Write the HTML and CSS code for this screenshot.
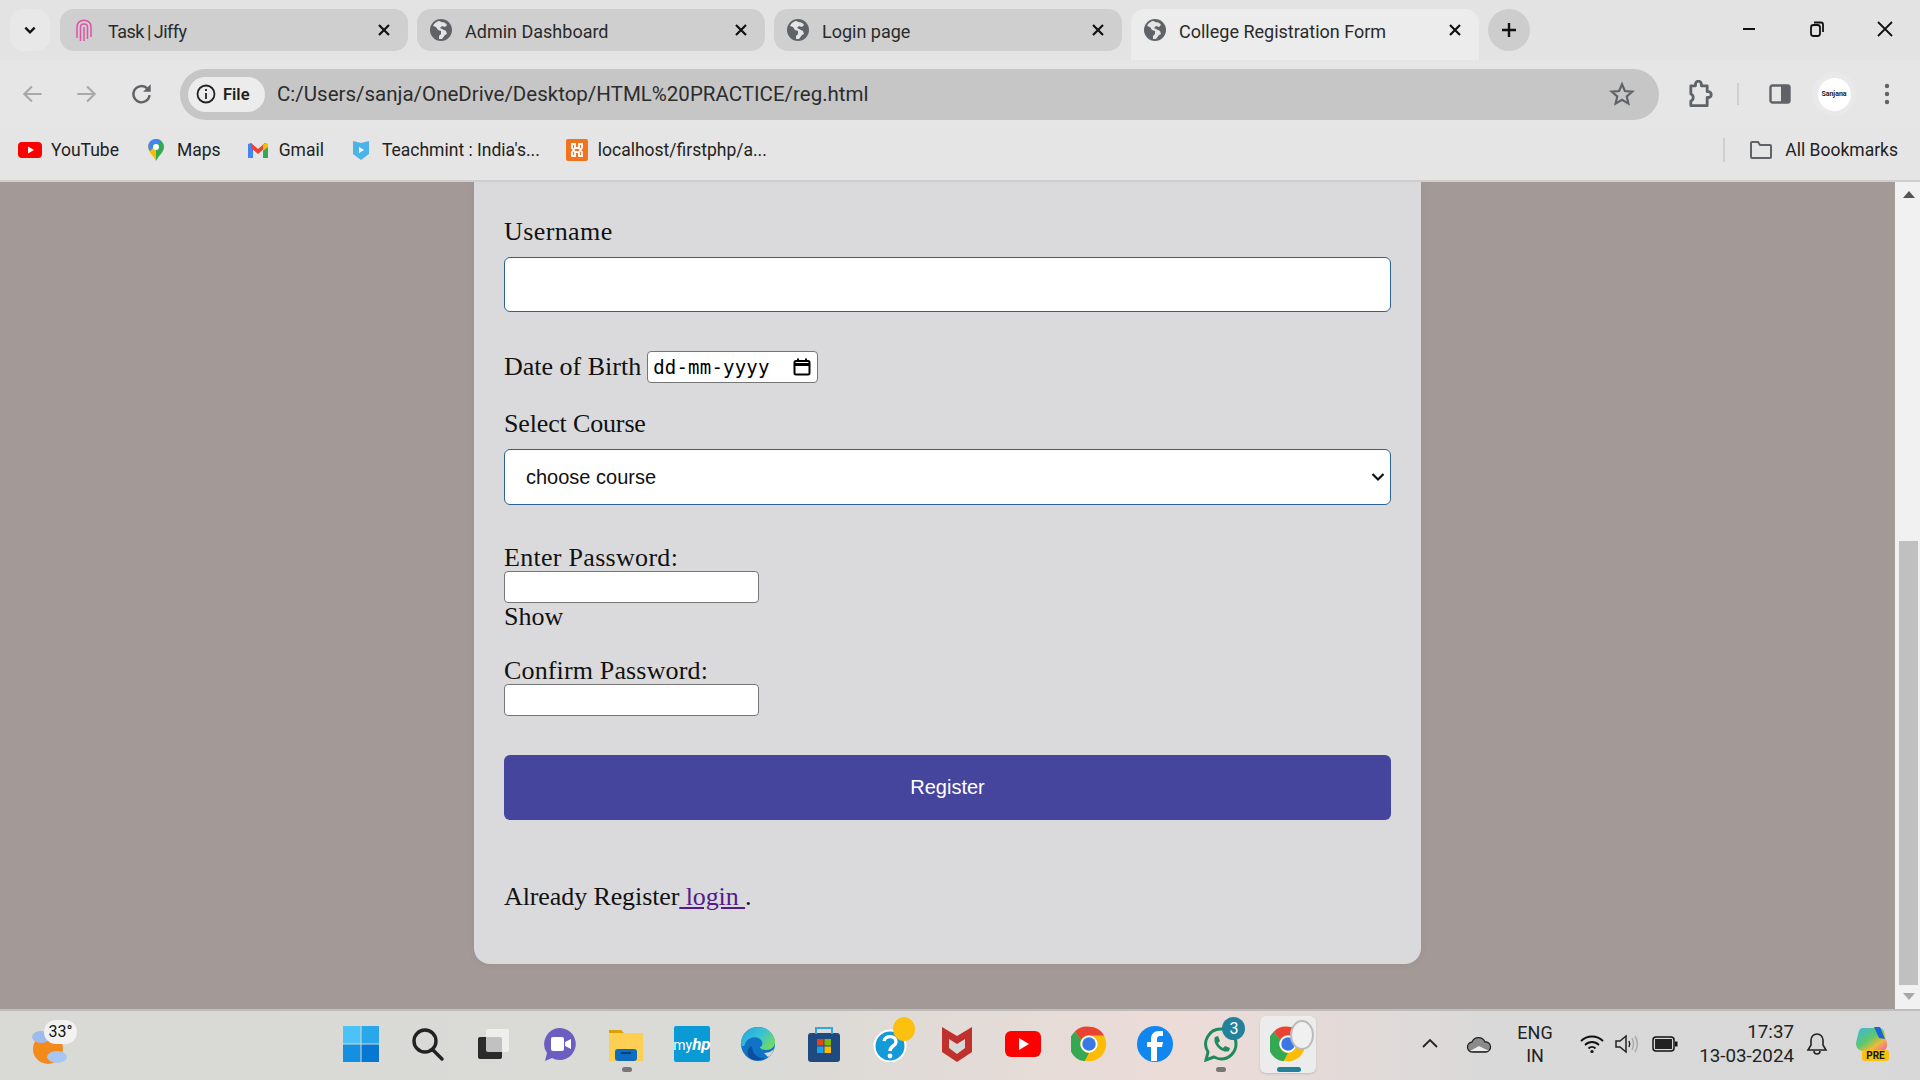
FILE: index.html
```html
<!DOCTYPE html>
<html lang="en">
<head>
<meta charset="utf-8">
<title>College Registration Form</title>
<link rel="stylesheet" href="styles.css">
</head>
<body>
<svg class="defs" width="0" height="0">
  <defs>
    <linearGradient id="edgeg" x1="0" y1="0" x2="1" y2=".6"><stop offset="0" stop-color="#2a9fe0"/><stop offset=".55" stop-color="#35c1d8"/><stop offset="1" stop-color="#6fd86a"/></linearGradient>
    <linearGradient id="cp" x1="0" y1="0" x2="1" y2="1"><stop offset="0" stop-color="#3bb4f0"/><stop offset=".45" stop-color="#5cc96b"/><stop offset=".7" stop-color="#f0b93a"/><stop offset="1" stop-color="#e857c0"/></linearGradient>
  </defs>
  <symbol id="globe" viewBox="0 0 24 24"><circle cx="12" cy="12" r="11" fill="#5f6368"/><path d="M11 3C8 3 5 5 4 8l3 1 2 3 3 1v3l-2 2v3h3l3-4 2-1-1-3-4-2-2-1 2-2 3 1 2-2c-1-2-3-3-6-3z" fill="#e4e4e4"/></symbol>
  <symbol id="x" viewBox="0 0 16 16"><path d="M3 3l10 10M13 3L3 13" stroke="#111" stroke-width="2.200" fill="none"/></symbol>
  <symbol id="chrome" viewBox="0 0 48 48"><circle cx="24" cy="24" r="23" fill="#fbbc04"/><path d="M24 1a23 23 0 0 1 20 11.500H24a12 12 0 0 0-10.400 6L5 7.500A23 23 0 0 1 24 1z" fill="#ea4335"/><path d="M5 7.500l8.600 11A12 12 0 0 0 24 36l-6 11A23 23 0 0 1 5 7.500z" fill="#34a853"/><circle cx="24" cy="24" r="11.500" fill="#fff"/><circle cx="24" cy="24" r="9" fill="#3b78e7"/></symbol>
</svg>
<div class="window">
  <div class="tabstrip">
    <div class="tabmenu"><svg class="ic12" viewBox="0 0 12 12"><path d="M2 4l4 4 4-4" stroke="#111" stroke-width="2" fill="none"/></svg></div>
    <div class="tab">
      <svg class="tabicon" viewBox="0 0 24 24" fill="none" stroke="#e052a8" stroke-width="1.500"><path d="M5 20V9c0-9 14-9 14 0v10"/><path d="M8.500 23V9c0-4 7-4 7 0v12"/><path d="M12 23V9"/></svg>
      <span class="tabtitle tabtitle-tight">Task | Jiffy</span>
      <svg class="tabclose"><use href="#x"/></svg>
    </div>
    <div class="tab">
      <svg class="tabicon"><use href="#globe"/></svg>
      <span class="tabtitle">Admin Dashboard</span>
      <svg class="tabclose"><use href="#x"/></svg>
    </div>
    <div class="tab">
      <svg class="tabicon"><use href="#globe"/></svg>
      <span class="tabtitle">Login page</span>
      <svg class="tabclose"><use href="#x"/></svg>
    </div>
    <div class="tab tab-active">
      <svg class="tabicon"><use href="#globe"/></svg>
      <span class="tabtitle">College Registration Form</span>
      <svg class="tabclose"><use href="#x"/></svg>
    </div>
    <div class="newtab"><svg class="ic18" viewBox="0 0 18 18"><path d="M9 2v14M2 9h14" stroke="#111" stroke-width="2.400"/></svg></div>
    <div class="winctl">
      <svg class="ic18" viewBox="0 0 18 18"><path d="M3 9h12" stroke="#111" stroke-width="2"/></svg>
      <svg class="ic18" viewBox="0 0 18 18" fill="none" stroke="#111" stroke-width="1.800"><rect x="3" y="5" width="9" height="11" rx="2.500"/><path d="M6 2.500h7a2 2 0 0 1 2 2V12"/></svg>
      <svg class="ic18" viewBox="0 0 18 18"><path d="M2 2l14 14M16 2L2 16" stroke="#111" stroke-width="1.800"/></svg>
    </div>
  </div>

  <div class="toolbar">
    <svg class="navicon" viewBox="0 0 24 24" fill="none" stroke="#a9a9a9" stroke-width="2"><path d="M20 12H5M11 5l-7 7 7 7"/></svg>
    <svg class="navicon" viewBox="0 0 24 24" fill="none" stroke="#a9a9a9" stroke-width="2"><path d="M4 12h15M13 5l7 7-7 7"/></svg>
    <svg class="navicon" viewBox="0 0 24 24" fill="none" stroke="#5f6368" stroke-width="2.200"><path d="M19 13a7.500 7.500 0 1 1-2-6l2 2"/><path d="M20 3v7h-7" fill="#5f6368" stroke="none"/></svg>
    <div class="omnibox">
      <div class="filepill">
        <svg class="ic20" viewBox="0 0 20 20" fill="none" stroke="#222" stroke-width="1.800"><circle cx="10" cy="10" r="8.500"/><path d="M10 9v6M10 5v2"/></svg>
        <span>File</span>
      </div>
      <span class="url">C:/Users/sanja/OneDrive/Desktop/HTML%20PRACTICE/reg.html</span>
      <svg class="star" viewBox="0 0 24 24" fill="none" stroke="#5f6368" stroke-width="2"><path d="M12 3l2.700 6.200 6.800.6-5.100 4.500 1.500 6.600-5.900-3.500-5.900 3.500 1.500-6.600-5.100-4.500 6.800-.6z"/></svg>
    </div>
    <div class="tools">
      <svg class="ext" viewBox="0 0 24 24" fill="none" stroke="#5f6368" stroke-width="2.400" stroke-linejoin="round"><path d="M5 5h4V3.500a2.500 2.500 0 0 1 5 0V5h5v5h1a2.500 2.500 0 0 1 0 5h-1v7H5v-4a3 3 0 0 0 2-3 3 3 0 0 0-2-3z"/></svg>
      <span class="vsep"></span>
      <svg class="side" viewBox="0 0 22 22"><rect x="1.500" y="2.500" width="19" height="17" rx="2" fill="none" stroke="#5f6368" stroke-width="2.400"/><rect x="12" y="3" width="8" height="16" fill="#5f6368"/></svg>
      <div class="avatar"><div class="avatar-in">Sanjana</div></div>
      <svg class="kebab" viewBox="0 0 6 24" fill="#5f6368"><circle cx="3" cy="4" r="2.200"/><circle cx="3" cy="12" r="2.200"/><circle cx="3" cy="20" r="2.200"/></svg>
    </div>
  </div>

  <div class="bookmarks">
    <div class="bm"><svg class="bmi" viewBox="0 0 24 24"><rect y="4" width="24" height="16" rx="4" fill="#f00"/><path d="M10 8.500l6 3.500-6 3.500z" fill="#fff"/></svg><span>YouTube</span></div>
    <div class="bm"><svg class="bmi" viewBox="0 0 24 24"><path d="M12 1a8 8 0 0 0-8 8c0 5 5 8 8 14z" fill="#fbbc04"/><path d="M12 1a8 8 0 0 1 8 8c0 5-5 8-8 14z" fill="#34a853"/><path d="M6 3.500A8 8 0 0 1 17 2.700L6 13a8 8 0 0 1 0-9.500z" fill="#4285f4"/><circle cx="12" cy="9" r="3" fill="#fff"/></svg><span>Maps</span></div>
    <div class="bm"><svg class="bmi" viewBox="0 0 24 24"><path d="M2 20V6l3-1 2 2v13z" fill="#4285f4"/><path d="M17 20V7l2-2 3 1v14z" fill="#34a853"/><path d="M5 5l7 6 7-6v5l-7 6-7-6z" fill="#ea4335"/><path d="M17 7l2-2 3 1v3l-5 4z" fill="#fbbc04"/></svg><span>Gmail</span></div>
    <div class="bm"><svg class="bmi" viewBox="0 0 24 24"><path d="M4 3l8 2 8-2v13l-8 6-8-6z" fill="#4ab3ea"/><path d="M10 9l5 3-5 3z" fill="#fff"/></svg><span>Teachmint : India's...</span></div>
    <div class="bm"><svg class="bmi" viewBox="0 0 24 24"><rect x="1" y="1" width="22" height="22" rx="2" fill="#f1731f"/><path d="M7 6h3v4h4V6h3v4l-2 2 2 2v4h-3v-4h-4v4H7v-4l2-2-2-2z" fill="none" stroke="#fff" stroke-width="1.800"/></svg><span>localhost/firstphp/a...</span></div>
    <div class="bm bm-all">
      <span class="vsep vsep-tall"></span>
      <svg class="bmi" viewBox="0 0 24 24" fill="none" stroke="#5f6368" stroke-width="2"><path d="M2 5a1 1 0 0 1 1-1h6l2 3h10a1 1 0 0 1 1 1v11a1 1 0 0 1-1 1H3a1 1 0 0 1-1-1z"/></svg>
      <span>All Bookmarks</span>
    </div>
  </div>

  <div class="viewport">
    <main class="page">
      <form class="card">
        <label class="lbl lbl-down lbl-user">Username</label>
        <input class="field" type="text">
        <div class="dob">
          <label class="lbl">Date of Birth</label>
          <div class="datebox">
            <span class="datetext">dd-mm-yyyy</span>
            <svg class="ic20" viewBox="0 0 20 20" fill="none" stroke="#000" stroke-width="2"><rect x="2.500" y="4" width="15" height="13.500" rx="1.500"/><path d="M2 7.500h16" stroke-width="3"/><path d="M6 1.500v3M14 1.500v3"/></svg>
          </div>
        </div>
        <label class="lbl lbl-down lbl-course">Select Course</label>
        <div class="selectwrap">
          <select class="field field-select"><option>choose course</option></select>
          <svg class="selectarrow" viewBox="0 0 14 10"><path d="M1.500 2l5.500 5.500L12.500 2" fill="none" stroke="#111" stroke-width="2.200"/></svg>
        </div>
        <label class="lbl lbl-down lbl-pass">Enter Password:</label>
        <input class="small" type="password">
        <span class="lbl lbl-show">Show</span>
        <label class="lbl lbl-down lbl-conf">Confirm Password:</label>
        <input class="small" type="password">
        <button class="submit" type="button">Register</button>
        <p class="lbl already">Already Register<a class="login" href="#"> login </a>.</p>
      </form>
    </main>
    <div class="scrollbar">
      <span class="arrow-up"></span>
      <span class="thumb-gap"></span>
      <span class="thumb"></span>
      <span class="arrow-down"></span>
    </div>
  </div>

  <footer class="taskbar">
    <div class="weather">
      <svg class="wx" viewBox="0 0 40 44"><circle cx="18" cy="25" r="15" fill="#f28a1c"/><ellipse cx="11" cy="13" rx="9" ry="6" fill="#9dbcec"/><ellipse cx="27" cy="33" rx="10" ry="6" fill="#a9c6f0"/></svg>
      <span class="wx-badge">33°</span>
    </div>
    <div class="apps">
      <svg class="app" viewBox="0 0 36 36"><rect width="17.500" height="17.500" fill="#4cc2f7"/><rect x="18.500" width="17.500" height="17.500" fill="#28a8ea"/><rect y="18.500" width="17.500" height="17.500" fill="#1390e0"/><rect x="18.500" y="18.500" width="17.500" height="17.500" fill="#0678d4"/></svg>
      <svg class="app" viewBox="0 0 36 36" fill="none" stroke="#222" stroke-width="3.400"><circle cx="16" cy="15" r="11"/><path d="M24 24l9 9" stroke-linecap="round"/></svg>
      <svg class="app" viewBox="0 0 36 36"><rect x="3" y="11" width="24" height="22" rx="2" fill="#2b2b2b"/><rect x="11" y="3" width="23" height="23" rx="2" fill="#f4f4f4" opacity=".75"/></svg>
      <svg class="app" viewBox="0 0 36 36"><path d="M18 2a16 16 0 1 1-8 30l-7 3 2-8A16 16 0 0 1 18 2z" fill="#6a5fc1"/><rect x="9" y="11" width="13" height="14" rx="2" fill="#fff"/><path d="M23 16l6-3v10l-6-3z" fill="#fff"/></svg>
      <svg class="app" viewBox="0 0 36 36"><path d="M1 4h12l3 3H1z" fill="#dca000"/><rect x="1" y="7" width="34" height="28" fill="#fdcf52"/><rect x="7" y="23" width="22" height="12" rx="3" fill="#0c6cc0"/><path d="M13 27h10" stroke="#063e7a" stroke-width="2"/></svg>
      <div class="app app-hp"><span class="hp-text">my<em class="hp-em">hp</em></span></div>
      <svg class="app" viewBox="0 0 36 36"><circle cx="18" cy="18" r="17" fill="#1173c6"/><path d="M1 18C1 7 9 1 18 1c10 0 17 8 17 15 0 5-4 8-9 8-3 0-6-1-6-3 3-1 3-5 1-7-4-5-14-3-16 4-1 3-2 3-5 0z" fill="url(#edgeg)"/><path d="M12 20c0 8 6 13 13 12-5 3-11 3-15 0-4-4-3-10 2-12z" fill="#0d4f9c"/><path d="M24 27c3 0 7-1 10-4-1 4-4 7-6 8z" fill="#d8d8d6"/></svg>
      <svg class="app" viewBox="0 0 36 36"><rect x="2" y="7" width="32" height="29" rx="3" fill="#1e4a80"/><path d="M10 8V2h16v6" fill="none" stroke="#31a8e0" stroke-width="2"/><rect x="11" y="13" width="6.500" height="6.500" fill="#e8421c"/><rect x="18.500" y="13" width="6.500" height="6.500" fill="#7fba00"/><rect x="11" y="20.500" width="6.500" height="6.500" fill="#1aa1f0"/><rect x="18.500" y="20.500" width="6.500" height="6.500" fill="#ffb900"/></svg>
      <div class="app app-help">
        <svg class="app-fill" viewBox="0 0 36 36"><circle cx="17" cy="20" r="15.500" fill="#149bd7" stroke="#fff" stroke-width="2"/><path d="M11 15c1-6 12-6 12 1 0 4-6 4-6 9" fill="none" stroke="#fff" stroke-width="3.400"/><circle cx="17" cy="30" r="2.400" fill="#fff"/></svg>
        <span class="help-dot"></span>
      </div>
      <svg class="app" viewBox="0 0 36 36"><path d="M3 1l15 9L33 1v25L18 36 3 26z" fill="#c0302c"/><path d="M10 13l8 5 8-5v9l-8 6-8-6z" fill="#d8d8d6"/></svg>
      <svg class="app" viewBox="0 0 36 36"><rect y="5" width="36" height="26" rx="6" fill="#f00"/><path d="M14 12l10 6-10 6z" fill="#fff"/></svg>
      <svg class="app"><use href="#chrome"/></svg>
      <svg class="app" viewBox="0 0 36 36"><circle cx="18" cy="18" r="18" fill="#1086f0"/><path d="M20 35V21h5l1-5h-6v-3c0-2 1-3 3-3h3V5h-4c-5 0-8 3-8 8v3h-4v5h4v14z" fill="#fff"/></svg>
      <div class="app app-wa">
        <svg class="app-fill" viewBox="0 0 36 36"><path d="M18 3a15 15 0 0 1 0 30c-3 0-5-1-7-2l-8 3 2-8a15 15 0 0 1 13-23z" fill="none" stroke="#1f8a5b" stroke-width="3"/><path d="M12 11l3-1 2 5-2 2c1 2 3 4 5 5l2-2 5 2-1 3c-8 3-17-8-14-14z" fill="#1f8a5b"/></svg>
        <span class="wa-badge">3</span>
      </div>
      <div class="app-active">
        <svg class="app app-chrome"><use href="#chrome"/></svg>
        <span class="mini-av"></span>
        <span class="active-bar"></span>
      </div>
      <span class="run-dot run-dot-folder"></span>
      <span class="run-dot run-dot-wa"></span>
    </div>
    <div class="tray">
      <svg class="tr tr-chev" viewBox="0 0 18 18" fill="none" stroke="#222" stroke-width="1.800"><path d="M2 12l7-7 7 7"/></svg>
      <svg class="tr tr-cloud" viewBox="0 0 26 18"><path d="M7 17a5 5 0 0 1-1-10 7 7 0 0 1 13 0 4.500 4.500 0 0 1 1 10z" fill="#8b8b8b" stroke="#222" stroke-width="1.300"/><path d="M4 16l9-5 10 5z" fill="#ededed"/></svg>
      <div class="eng"><span>ENG</span><span>IN</span></div>
      <svg class="tr tr-wifi" viewBox="0 0 24 20" fill="none" stroke="#111" stroke-width="1.800"><path d="M1 7c6-6 16-6 22 0M5 11c4-4 10-4 14 0M8.500 14.500c2-2 5-2 7 0"/><circle cx="12" cy="17.500" r="1.600" fill="#111" stroke="none"/></svg>
      <svg class="tr tr-vol" viewBox="0 0 24 20" fill="none" stroke="#222" stroke-width="1.500"><path d="M1 7h4l6-5v16l-6-5H1z"/><path d="M14 7c1 2 1 4 0 6"/><path d="M17 4c2 4 2 8 0 12M20 2c3 5 3 11 0 16" stroke="#aaa"/></svg>
      <svg class="tr tr-batt" viewBox="0 0 26 16"><rect x="1" y="1" width="21" height="14" rx="3" fill="none" stroke="#111" stroke-width="1.500"/><rect x="3" y="3" width="17" height="10" fill="#222"/><rect x="23" y="5.500" width="2.500" height="5" fill="#111"/></svg>
      <div class="clock"><span>17:37</span><span>13-03-2024</span></div>
      <svg class="tr tr-bell" viewBox="0 0 22 24" fill="none" stroke="#222" stroke-width="1.600"><path d="M11 2a6 6 0 0 0-6 6v5l-3 5h18l-3-5V8a6 6 0 0 0-6-6zM8 19a3 3 0 0 0 6 0"/></svg>
      <div class="copilot">
        <svg class="copilot-ic" viewBox="0 0 34 28"><path d="M9 2h16c4 0 5 2 6 7l2 8c1 5-2 8-6 8H10c-5 0-8-3-8-8l2-8c1-5 2-7 5-7z" fill="url(#cp)"/><path d="M20 1h6l5 12-6-1z" fill="#1c63d8"/></svg>
        <span class="pre">PRE</span>
      </div>
    </div>
  </footer>
</div>
</body>
</html>
```

FILE: styles.css
```css
* { box-sizing: border-box; }
html, body { margin: 0; height: 100%; overflow: hidden; }
body { font-family: Roboto, "Open Sans", sans-serif; color: #1f1f1f; }
.defs { position: absolute; }
.window { display: flex; flex-direction: column; height: 1080px; width: 1920px; background: #e5e5e5; }

/* tab strip */
.tabstrip { display: flex; align-items: flex-start; height: 60px; padding: 9px 0 0 10px; background: #e3e3e3; flex: none; }
.tabmenu { width: 40px; height: 42px; margin-right: 10px; border-radius: 14px; background: #e8e8e8; display: flex; align-items: center; justify-content: center; }
.ic12 { width: 14px; height: 14px; }
.ic18 { width: 18px; height: 18px; }
.ic20 { width: 20px; height: 20px; flex: none; }
.tab { display: flex; align-items: center; width: 348px; height: 42px; margin-right: 9px; padding: 0 16px 0 12px; background: #cfcfcf; border-radius: 14px; }
.tab-active { height: 51px; padding-bottom: 9px; background: #ececec; border-radius: 14px 14px 0 0; }
.tabicon { width: 24px; height: 24px; flex: none; margin-right: 12px; }
.tabtitle { flex: 1; padding-top: 3px; font-size: 18px; color: #2a2a2a; }
.tabtitle-tight { letter-spacing: -.5px; word-spacing: -1px; }
.tabclose { width: 16px; height: 16px; flex: none; }
.newtab { width: 42px; height: 42px; border-radius: 50%; background: #cdcdcd; display: flex; align-items: center; justify-content: center; }
.winctl { display: flex; gap: 50px; margin-left: auto; margin-right: 26px; padding-top: 11px; }

/* toolbar */
.toolbar { display: flex; align-items: center; height: 68px; padding: 0 0 0 20px; background: #e6e6e6; flex: none; }
.navicon { width: 26px; height: 26px; margin-right: 27px; flex: none; }
.navicon:nth-child(2) { margin-right: 30px; }
.navicon:nth-child(3) { margin-right: 25px; }
.omnibox { display: flex; align-items: center; width: 1479px; height: 51px; padding: 0 24px 0 8px; border-radius: 26px; background: #c6c6c6; flex: none; }
.filepill { display: flex; align-items: center; gap: 7px; width: 77px; height: 35px; padding-left: 8px; border-radius: 18px; background: #ececec; font-size: 16.500px; font-weight: 600; }
.url { flex: 1; margin-left: 12px; font-size: 20.500px; color: #2c2c2c; }
.star { width: 26px; height: 26px; flex: none; }
.tools { display: flex; align-items: center; flex: 1; padding-left: 26px; }
.ext { width: 28px; height: 28px; flex: none; }
.vsep { width: 2px; height: 22px; margin-left: 24px; background: #cfcfcf; flex: none; }
.side { width: 22px; height: 22px; margin-left: 30px; flex: none; }
.avatar { width: 44px; height: 44px; margin-left: 21px; border-radius: 50%; background: #e9e9e9; display: flex; align-items: center; justify-content: center; flex: none; }
.avatar-in { width: 33px; height: 33px; border-radius: 50%; background: #fff; font-size: 7px; font-weight: 700; text-align: center; line-height: 33px; color: #222; }
.kebab { width: 6px; height: 24px; margin-left: 28px; flex: none; }

/* bookmarks */
.bookmarks { display: flex; align-items: center; gap: 25px; height: 54px; padding: 0 22px 9px 18px; background: #e5e5e5; border-bottom: 2px solid #cecece; flex: none; }
.bm { display: flex; align-items: center; gap: 9px; font-size: 17.500px; color: #222; white-space: nowrap; }
.bmi { width: 24px; height: 24px; flex: none; }
.bm-all { margin-left: auto; gap: 12px; }
.vsep-tall { height: 24px; margin: 0 12px 0 0; }

/* page */
.viewport { display: flex; flex: 1; min-height: 0; overflow: hidden; }
.page { flex: 1; display: flex; justify-content: center; background: #a39997; }
.card { display: flex; flex-direction: column; align-items: flex-start; width: 947px; height: 782px; padding: 0 30px; background: #dadadc; border-radius: 0 0 16px 16px; box-shadow: 0 0 10px rgba(0,0,0,.06); }
.lbl { font-family: "Liberation Serif", Georgia, serif; font-size: 26px; line-height: 28px; color: #111; }
.lbl-down { padding-top: 2px; line-height: 26px; }
.lbl-user { margin-top: 35px; letter-spacing: .4px; }
.field { width: 887px; height: 55px; margin-top: 12px; border: 1.500px solid #2b6394; border-radius: 6px; background: #fff; }
.selectwrap { position: relative; width: 887px; margin-top: 12px; }
.field-select { display: block; height: 56px; margin-top: 0; padding-left: 21px; appearance: none; font-family: "Liberation Sans", Arial, sans-serif; font-size: 20px; color: #111; }
.selectarrow { position: absolute; right: 6px; top: 23px; width: 14px; height: 10px; }
.dob { display: flex; align-items: center; gap: 6px; margin-top: 39px; }
.datebox { display: flex; align-items: center; justify-content: space-between; width: 171px; height: 32px; padding: 0 5px; background: #fff; border: 1px solid #767676; border-radius: 4px; }
.datetext { font-family: "DejaVu Sans Mono", monospace; font-size: 19px; letter-spacing: .2px; color: #000; }
.lbl-course { margin-top: 26px; letter-spacing: -.15px; }
.lbl-pass { margin-top: 38px; letter-spacing: .3px; }
.small { width: 255px; height: 32px; margin-top: 0; border: 1px solid #767676; border-radius: 4px; background: #fff; }
.lbl-conf { margin-top: 25px; letter-spacing: .15px; }
.submit { width: 887px; height: 65px; margin-top: 39px; border: 0; border-radius: 6px; background: #45459e; color: #fff; font-family: "Liberation Sans", Arial, sans-serif; font-size: 20px; }
.already { margin: 63px 0 0; white-space: pre; letter-spacing: -.1px; }
.login { color: #551a8b; text-decoration: underline; }

/* scrollbar */
.scrollbar { display: flex; flex-direction: column; align-items: center; width: 25px; padding: 9px 2px 9px 4px; background: #f1f1f1; flex: none; }
.arrow-up { width: 0; height: 0; border: 6px solid transparent; border-top: 0; border-bottom: 7px solid #555; }
.thumb-gap { height: 343px; flex: none; }
.thumb { width: 100%; flex: 1; background: #c0c0c0; }
.arrow-down { width: 0; height: 0; margin-top: 8px; border: 6px solid transparent; border-bottom: 0; border-top: 7px solid #a8a8a8; }

/* taskbar */
.taskbar { display: flex; align-items: center; height: 71px; padding: 0 0 3px 28px; border-top: 2px solid #bdbdbd; background: linear-gradient(90deg, #d9d9d6 0%, #dadad6 40%, #ecdcd8 62%, #d9d9d9 78%, #d8d8d8 100%); flex: none; }
.weather { position: relative; width: 50px; height: 48px; flex: none; }
.wx { width: 40px; height: 44px; margin: 4px 0 0 2px; }
.wx-badge { position: absolute; left: 16px; top: 0; width: 33px; height: 24px; border-radius: 12px; background: #f2f2f2; font-size: 16px; line-height: 24px; text-align: center; color: #111; }
.apps { position: relative; display: flex; align-items: center; gap: 30.200px; margin-left: 265px; }
.app { display: block; width: 36px; height: 36px; flex: none; }
.app-fill { display: block; width: 36px; height: 36px; }
.app-hp { background: #0a9ad6; display: flex; align-items: center; justify-content: center; border-radius: 2px; }
.hp-text { font-size: 14px; color: #fff; }
.hp-em { font-size: 17px; font-weight: 700; }
.app-help, .app-wa { position: relative; }
.help-dot { position: absolute; left: 20px; top: -9px; width: 22px; height: 24px; border-radius: 50%; background: #fcc10f; }
.wa-badge { position: absolute; left: 19px; top: -9px; width: 23px; height: 23px; border-radius: 50%; background: #23829a; color: #fff; font-size: 16px; line-height: 23px; text-align: center; }
.app-active { position: relative; width: 56px; height: 57px; margin: 0 -10px; padding: 10px 10px 0; border-radius: 6px; background: #ececec; box-shadow: 0 1px 2px rgba(0,0,0,.15); flex: none; }
.mini-av { position: absolute; right: 2px; top: 4px; width: 24px; height: 30px; border-radius: 50%; background: #f0f0f0; border: 2px solid #bbb; }
.active-bar { position: absolute; left: 17px; bottom: 1px; width: 24px; height: 5px; border-radius: 3px; background: #23829a; }
.run-dot { position: absolute; bottom: 1px; width: 10px; height: 5px; border-radius: 3px; background: #777; }
.run-dot-folder { left: 279px; }
.run-dot-wa { left: 873px; }
.tray { display: flex; align-items: center; margin-left: auto; padding-right: 30px; }
.tr { display: block; flex: none; }
.tr-chev { width: 18px; height: 18px; }
.tr-cloud { width: 26px; height: 18px; margin-left: 27px; }
.eng { display: flex; flex-direction: column; align-items: center; width: 36px; margin-left: 25px; font-size: 18px; line-height: 23px; color: #222; }
.tr-wifi { width: 24px; height: 20px; margin-left: 27px; }
.tr-vol { width: 24px; height: 20px; margin-left: 11px; }
.tr-batt { width: 26px; height: 16px; margin-left: 13px; }
.clock { display: flex; flex-direction: column; align-items: flex-end; width: 106px; margin-left: 10px; font-size: 18.800px; line-height: 24px; color: #222; }
.tr-bell { width: 22px; height: 24px; margin-left: 12px; }
.copilot { position: relative; width: 36px; height: 36px; margin-left: 26px; }
.copilot-ic { width: 34px; height: 28px; }
.pre { position: absolute; left: 8px; top: 24px; width: 27px; height: 11px; border-radius: 3px; background: #fcc10f; font-size: 10px; font-weight: 700; line-height: 11px; text-align: center; color: #111; }
```
